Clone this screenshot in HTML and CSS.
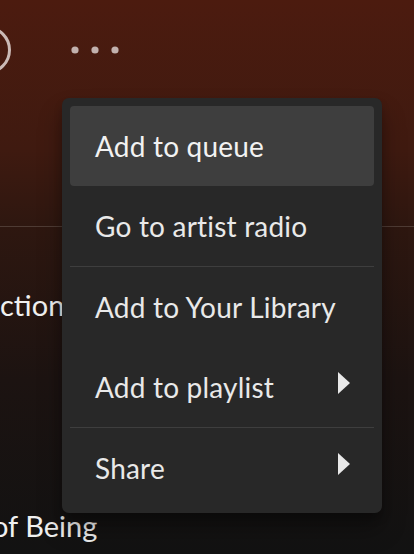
FILE: index.html
```html
<!DOCTYPE html>
<html lang="en">
<head>
<meta charset="utf-8">
<title>Context menu</title>
<link rel="stylesheet" href="styles.css">
</head>
<body>
<div class="page">
  <div class="header">
    <span class="ring"></span>
    <svg class="more" width="52" height="10" viewBox="0 0 52 10" aria-label="More">
      <circle cx="5" cy="5" r="3.6"/>
      <circle cx="25" cy="5" r="3.6"/>
      <circle cx="45" cy="5" r="3.6"/>
    </svg>
  </div>
  <div class="divider"></div>
  <div class="tracks">
    <div class="track track-a">ction</div>
    <div class="track track-b">of Being</div>
  </div>

  <ul class="menu">
    <li class="item active">Add to queue</li>
    <li class="item">Go to artist radio</li>
    <li class="sep"></li>
    <li class="item">Add to Your Library</li>
    <li class="item">Add to playlist <span class="arrow"></span></li>
    <li class="sep"></li>
    <li class="item">Share <span class="arrow"></span></li>
  </ul>
</div>
</body>
</html>
```
FILE: styles.css
```css
html, body {
  margin: 0;
  padding: 0;
}
body {
  width: 414px;
  height: 554px;
  overflow: hidden;
  font-family: Lato, "Noto Sans", sans-serif;
  background: linear-gradient(#4c1b0f 0px, #3f1a10 150px, #2e1710 226px, #1c1311 380px, #121212 554px);
}
.page {
  position: relative;
  width: 414px;
  height: 554px;
}
.header {
  height: 100px;
  display: flex;
  align-items: center;
}
.ring {
  width: 42px;
  height: 42px;
  border: 3px solid #cbbab6;
  border-radius: 50%;
  margin-left: -37px;
  flex: none;
}
.more {
  margin-left: 59px;
  fill: #c2b1ae;
}
.divider {
  margin-top: 126px;
  height: 1px;
  background: #4e3b34;
}
.tracks {
  display: flex;
  flex-direction: column;
}
.track {
  color: #f0f0f0;
  font-size: 29px;
  line-height: 34px;
  white-space: nowrap;
}
.track-a {
  margin-top: 61px;
  margin-left: 0;
}
.track-b {
  margin-top: 187px;
  margin-left: -8px;
}
.menu {
  position: absolute;
  left: 62px;
  top: 98px;
  width: 320px;
  height: 415px;
  box-sizing: border-box;
  margin: 0;
  padding: 8px 8px 5px;
  list-style: none;
  background: #282828;
  border-radius: 7px;
  box-shadow: 0 16px 24px rgba(0,0,0,.3), 0 6px 8px rgba(0,0,0,.2);
  display: flex;
  flex-direction: column;
}
.item {
  height: 80px;
  flex: none;
  display: flex;
  align-items: center;
  justify-content: space-between;
  padding: 0 24px 0 25px;
  border-radius: 4px;
  color: #e9e9e9;
  font-size: 28px;
  letter-spacing: 0.2px;
  white-space: nowrap;
}
.item.active {
  background: #3e3e3e;
  color: #f2f2f2;
}
.sep {
  height: 1px;
  flex: none;
  background: #3e3e3e;
}
.arrow {
  width: 0;
  height: 0;
  border-top: 11.5px solid transparent;
  border-bottom: 11.5px solid transparent;
  border-left: 12px solid #e9e9e9;
  margin-bottom: 9px;
}
```
